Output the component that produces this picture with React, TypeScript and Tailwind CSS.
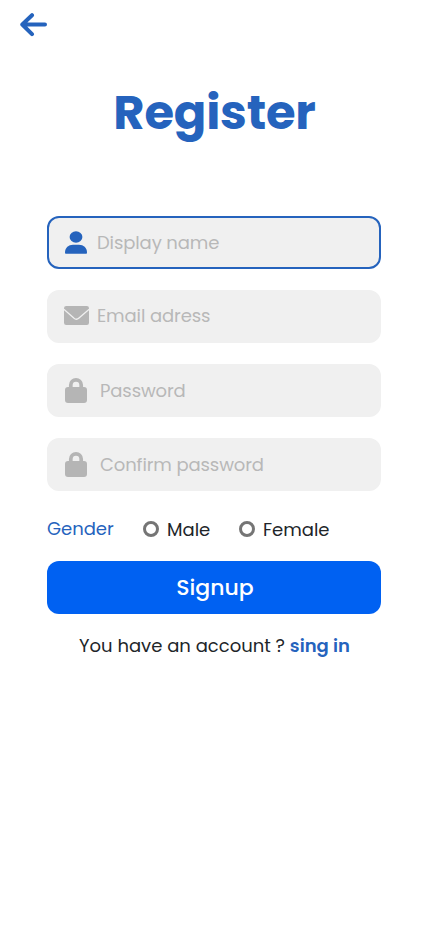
import type { ReactNode } from "react";

function BackArrow() {
  return (
    <svg width="28" height="24" viewBox="0 0 28 24" fill="none" stroke="#2563bd" strokeWidth="4" strokeLinecap="round" strokeLinejoin="round">
      <path d="M12 2.2 2.3 11.5l9.7 9.7M3 11.5h22" />
    </svg>
  );
}

function PersonIcon() {
  return (
    <svg width="22" height="23" viewBox="0 0 22 23" fill="#2563bd">
      <ellipse cx="11" cy="6" rx="6.4" ry="5.7" />
      <path d="M0 21.6C0 16.6 3.6 13.7 8 13.7h6c4.4 0 8 2.9 8 7.9 0 .9-.3 1.2-1.2 1.2H1.2C.3 22.8 0 22.5 0 21.6Z" />
    </svg>
  );
}

function MailIcon() {
  return (
    <svg width="25" height="19" viewBox="0 0 25 19" fill="#b5b5b5">
      <rect width="25" height="19" rx="2.2" />
      <path d="M-.2 3.3 9.8 12.1Q12.3 14.5 15 12.1L25.2 3.3" fill="none" stroke="#f0f0f0" strokeWidth="1.3" />
    </svg>
  );
}

function LockIcon() {
  return (
    <svg width="22" height="25" viewBox="0 0 22 25" fill="#b5b5b5">
      <rect y="8.9" width="22" height="16.1" rx="3" />
      <path d="M5.8 11V7.1a5.2 5.2 0 0 1 10.4 0V11" fill="none" stroke="#b5b5b5" strokeWidth="3.7" />
    </svg>
  );
}

function Field({ icon, label, className }: { icon: ReactNode; label: string; className: string }) {
  return (
    <div className={`flex h-[53px] items-center rounded-xl border-2 bg-[#f0f0f0] text-[18px] leading-[27px] tracking-[-0.11px] text-[#b8b8b8] ${className}`}>
      {icon}
      <span className="whitespace-nowrap">{label}</span>
    </div>
  );
}

function Choice({ label, className }: { label: string; className: string }) {
  return (
    <div className={`flex items-center gap-2 ${className}`}>
      <span className="size-4 rounded-full border-[3px] border-[#757575]" />
      <span className="pt-px text-[#212529]">{label}</span>
    </div>
  );
}

export default function App() {
  return (
    <main className="flex h-[926px] flex-col bg-white font-[Poppins,Inter,sans-serif]">
      <header className="h-[77px] pt-[13px] pl-5"><BackArrow /></header>
      <h1 className="h-[139px] pl-px text-center text-[48px] leading-[72px] font-bold tracking-[-0.2px] whitespace-nowrap text-[#2563bd]">Register</h1>
      <form className="flex flex-col px-[47px]">
        <div className="flex flex-col gap-[21px]">
          <Field icon={<PersonIcon />} label="Display name" className="gap-[10px] border-[#2563bd] pl-4" />
          <Field icon={<MailIcon />} label="Email adress" className="gap-2 border-[#f0f0f0] pb-0.5 pl-[15px]" />
          <Field icon={<LockIcon />} label="Password" className="gap-[13px] border-[#f0f0f0] pl-4" />
          <Field icon={<LockIcon />} label="Confirm password" className="gap-[13px] border-[#f0f0f0] pl-4" />
        </div>
        <div className="mt-[24px] flex h-[27px] items-center text-[18px] leading-[27px]">
          <span className="w-24 text-[#2563bd]">Gender</span>
          <Choice label="Male" className="w-24" />
          <Choice label="Female" className="" />
        </div>
        <button type="button" className="mt-[19px] h-[53px] rounded-xl bg-[#0061f2] pl-0.5 text-[22px] leading-[33px] font-medium text-white">Signup</button>
        <p className="mt-[18px] pl-px text-center text-[18px] leading-[27px] whitespace-nowrap text-[#212529]">
          You have an account ? <a className="font-semibold text-[#2563bd]">sing in</a>
        </p>
      </form>
    </main>
  );
}
